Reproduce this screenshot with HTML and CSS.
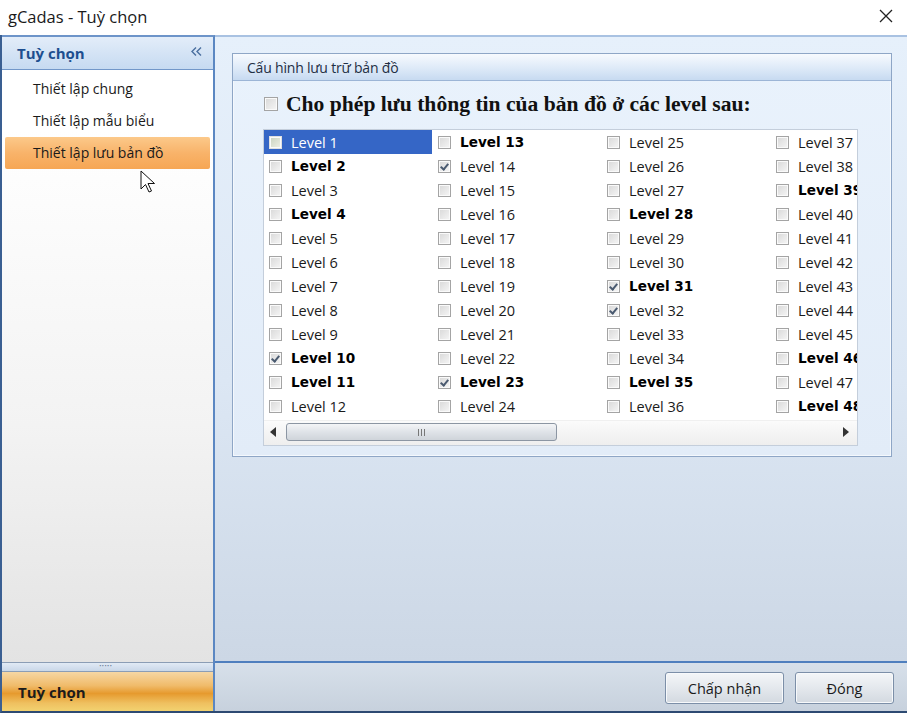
FILE: index.html
```html
<!DOCTYPE html>
<html lang="vi">
<head>
  <meta charset="UTF-8">
  <title>gCadas - Tuỳ chọn</title>
  <link rel="stylesheet" href="styles.css">
</head>
<body>
  <div class="titlebar">
    <span class="title">gCadas - Tuỳ chọn</span>
    <svg class="close" width="14" height="14" viewBox="0 0 14 14">
      <path d="M1 1 L13 13 M13 1 L1 13" stroke="#222" stroke-width="1.3" fill="none"/>
    </svg>
  </div>

  <div class="window">
    <div class="sidebar">
      <div class="sidebar-head">
        <span>Tuỳ chọn</span>
        <svg class="collapse" width="11" height="9" viewBox="0 0 11 9">
          <path d="M5 0.5 L1 4.5 L5 8.5 M10 0.5 L6 4.5 L10 8.5" stroke="#4a6f9f" stroke-width="1.4" fill="none"/>
        </svg>
      </div>
      <div class="nav">
        <div class="nav-item">Thiết lập chung</div>
        <div class="nav-item">Thiết lập mẫu biểu</div>
        <div class="nav-item active">Thiết lập lưu bản đồ</div>
        <svg class="cursor" width="16" height="24" viewBox="0 0 16 24">
          <path d="M1 1 L1 19 L5.5 14.5 L9 22 L11.5 21 L8 13.5 L14.5 13.5 Z" fill="#fff" stroke="#111" stroke-width="1" stroke-linejoin="round"/>
        </svg>
      </div>
      <div class="splitter"><span class="grip">&middot;&middot;&middot;&middot;&middot;</span></div>
      <div class="sidebar-foot">Tuỳ chọn</div>
    </div>

    <div class="content">
      <div class="pane">
        <div class="groupbox">
          <div class="groupbox-head">Cấu hình lưu trữ bản đồ</div>
          <label class="allow">
            <span class="cb big"></span>
            <span>Cho phép lưu thông tin của bản đồ ở các level sau:</span>
          </label>
          <div class="listbox">
            <div class="levels">
              <div class="level selected"><span class="cb"></span>Level 1</div>
              <div class="level bold"><span class="cb"></span>Level 2</div>
              <div class="level"><span class="cb"></span>Level 3</div>
              <div class="level bold"><span class="cb"></span>Level 4</div>
              <div class="level"><span class="cb"></span>Level 5</div>
              <div class="level"><span class="cb"></span>Level 6</div>
              <div class="level"><span class="cb"></span>Level 7</div>
              <div class="level"><span class="cb"></span>Level 8</div>
              <div class="level"><span class="cb"></span>Level 9</div>
              <div class="level bold"><span class="cb checked"></span>Level 10</div>
              <div class="level bold"><span class="cb"></span>Level 11</div>
              <div class="level"><span class="cb"></span>Level 12</div>

              <div class="level bold"><span class="cb"></span>Level 13</div>
              <div class="level"><span class="cb checked"></span>Level 14</div>
              <div class="level"><span class="cb"></span>Level 15</div>
              <div class="level"><span class="cb"></span>Level 16</div>
              <div class="level"><span class="cb"></span>Level 17</div>
              <div class="level"><span class="cb"></span>Level 18</div>
              <div class="level"><span class="cb"></span>Level 19</div>
              <div class="level"><span class="cb"></span>Level 20</div>
              <div class="level"><span class="cb"></span>Level 21</div>
              <div class="level"><span class="cb"></span>Level 22</div>
              <div class="level bold"><span class="cb checked"></span>Level 23</div>
              <div class="level"><span class="cb"></span>Level 24</div>

              <div class="level"><span class="cb"></span>Level 25</div>
              <div class="level"><span class="cb"></span>Level 26</div>
              <div class="level"><span class="cb"></span>Level 27</div>
              <div class="level bold"><span class="cb"></span>Level 28</div>
              <div class="level"><span class="cb"></span>Level 29</div>
              <div class="level"><span class="cb"></span>Level 30</div>
              <div class="level bold"><span class="cb checked"></span>Level 31</div>
              <div class="level"><span class="cb checked"></span>Level 32</div>
              <div class="level"><span class="cb"></span>Level 33</div>
              <div class="level"><span class="cb"></span>Level 34</div>
              <div class="level bold"><span class="cb"></span>Level 35</div>
              <div class="level"><span class="cb"></span>Level 36</div>

              <div class="level"><span class="cb"></span>Level 37</div>
              <div class="level"><span class="cb"></span>Level 38</div>
              <div class="level bold"><span class="cb"></span>Level 39</div>
              <div class="level"><span class="cb"></span>Level 40</div>
              <div class="level"><span class="cb"></span>Level 41</div>
              <div class="level"><span class="cb"></span>Level 42</div>
              <div class="level"><span class="cb"></span>Level 43</div>
              <div class="level"><span class="cb"></span>Level 44</div>
              <div class="level"><span class="cb"></span>Level 45</div>
              <div class="level bold"><span class="cb"></span>Level 46</div>
              <div class="level"><span class="cb"></span>Level 47</div>
              <div class="level bold"><span class="cb"></span>Level 48</div>
            </div>
            <div class="hscroll">
              <svg class="arrow" width="6" height="10" viewBox="0 0 6 10"><path d="M6 0 L0 5 L6 10 Z" fill="#333"/></svg>
              <div class="track">
                <div class="thumb"><span class="thumb-grip"></span></div>
              </div>
              <svg class="arrow" width="6" height="10" viewBox="0 0 6 10"><path d="M0 0 L6 5 L0 10 Z" fill="#333"/></svg>
            </div>
          </div>
        </div>
      </div>
      <div class="actions">
        <button class="btn">Chấp nhận</button>
        <button class="btn narrow">Đóng</button>
      </div>
    </div>
  </div>
</body>
</html>
```

FILE: styles.css
```css
body {
  margin: 0;
  width: 907px;
  height: 713px;
  overflow: hidden;
  background: #fff;
  font-family: "Open Sans", "Noto Sans", sans-serif;
  color: #111;
}

.titlebar {
  height: 35px;
  display: flex;
  align-items: center;
  justify-content: space-between;
  padding: 0 14px 3px 8px;
  box-sizing: border-box;
  background: #fff;
}

.title {
  font-size: 16.5px;
  color: #1a1a1a;
}

.window {
  display: flex;
  height: 678px;
  border-left: 2px solid #3a5f92;
  border-bottom: 2px solid #2d4a72;
  box-sizing: border-box;
}

/* left navigation */
.sidebar {
  width: 211px;
  display: flex;
  flex-direction: column;
  border-top: 2px solid #6d94c9;
  border-right: 2px solid #5b87c2;
}

.sidebar-head {
  height: 32px;
  display: flex;
  align-items: center;
  justify-content: space-between;
  padding: 0 11px 0 15px;
  background: linear-gradient(#e3edf9, #c6daf1);
  border-bottom: 1px solid #7297c9;
  color: #1d4e8f;
  font-weight: bold;
  font-size: 15px;
}

.collapse {
  margin-top: -3px;
}

.nav {
  flex: 1;
  position: relative;
  padding-top: 3px;
  background: linear-gradient(#fff 10%, #f3f3f3 60%, #e3e3e3);
}

.nav-item {
  height: 32px;
  line-height: 32px;
  margin: 0 3px;
  padding-left: 28px;
  font-size: 14px;
  color: #1a1a1a;
}

.nav-item.active {
  background: linear-gradient(#fcc98a, #f8b36a 50%, #f6a654);
  border-radius: 2px;
}

.cursor {
  position: absolute;
  left: 138px;
  top: 100px;
}

.splitter {
  height: 8px;
  border-top: 1px solid #8b9db5;
  border-bottom: 1px solid #8b9db5;
  background: linear-gradient(#e1eaf5, #c9d7e8);
  text-align: center;
  line-height: 4px;
  font-size: 10px;
  color: #6a7d96;
}

.grip {
  margin-left: -4px;
}

.sidebar-foot {
  height: 39px;
  display: flex;
  align-items: center;
  padding-left: 16px;
  font-weight: bold;
  font-size: 15px;
  color: #1b1b1b;
  background: linear-gradient(#f6d7a4, #f0bb6a 35%, #e69a2e 55%, #efc060 80%, #f2d270);
}

/* right content */
.content {
  flex: 1;
  display: flex;
  flex-direction: column;
  border-top: 2px solid #a9c2e2;
}

.pane {
  flex: 1;
  padding: 16px 0 0 17px;
  background: linear-gradient(#e6f0fb, #dce7f4 55%, #ccd7e5);
}

.groupbox {
  width: 658px;
  height: 402px;
  border: 1px solid #8ea6c6;
  background: linear-gradient(#e9f2fc, #e2ecf8);
  box-shadow: inset 0 0 0 1px #f4f8fd;
}

.groupbox-head {
  height: 26px;
  line-height: 28px;
  padding-left: 14px;
  font-size: 14px;
  letter-spacing: -0.2px;
  color: #1f2f44;
  background: linear-gradient(#f7fafe, #dbe8f7 60%, #c7daf1);
  border-bottom: 1px solid #9cb5d6;
}

.allow {
  display: flex;
  align-items: center;
  gap: 8px;
  margin: 10px 0 0 31px;
  height: 26px;
  font-family: "Liberation Serif", serif;
  font-weight: bold;
  font-size: 21.6px;
  color: #111;
}

.listbox {
  width: 593px;
  height: 315px;
  margin: 12px 0 0 30px;
  border: 1px solid #c4cedb;
  background: #fff;
  display: flex;
  flex-direction: column;
  overflow: hidden;
}

.levels {
  flex: 1;
  display: grid;
  grid-template-rows: repeat(12, 24px);
  grid-auto-flow: column;
  grid-auto-columns: 169px;
  overflow: hidden;
}

.level {
  display: flex;
  align-items: center;
  width: 168px;
  padding-left: 5px;
  box-sizing: border-box;
  font-size: 14.5px;
  color: #1a1a1a;
  white-space: nowrap;
}

.level.bold {
  font-family: "DejaVu Sans", sans-serif;
  font-weight: bold;
  font-size: 13.6px;
  color: #000;
}

.level.selected {
  background: #3566c6;
  color: #fff;
}

.cb {
  width: 13px;
  height: 13px;
  flex: none;
  box-sizing: border-box;
  border: 1px solid #a4a4a4;
  background: linear-gradient(135deg, #d8d8d8, #f6f6f6);
  box-shadow: inset 0 0 0 1px #fafafa;
  position: relative;
}

.cb.big {
  width: 14px;
  height: 14px;
}

.level .cb {
  margin-right: 9px;
}

.level.selected .cb {
  border-color: #e0e0e0;
  background: linear-gradient(135deg, #c9d2c0, #f0f0e6);
}

.cb.checked::after {
  content: "";
  position: absolute;
  left: 3px;
  top: 1px;
  width: 3px;
  height: 6px;
  border: solid #4a5a70;
  border-width: 0 2px 2px 0;
  transform: rotate(40deg);
}

.hscroll {
  height: 25px;
  display: flex;
  align-items: center;
  gap: 10px;
  padding: 0 8px 2px 6px;
  box-sizing: border-box;
  background: linear-gradient(#fbfbfb, #eeeeee);
  border-top: 1px solid #f0f0f0;
}

.track {
  flex: 1;
  height: 18px;
}

.thumb {
  width: 271px;
  height: 18px;
  box-sizing: border-box;
  border: 1px solid #8c96a3;
  border-radius: 3px;
  background: linear-gradient(#f4f5f7, #dfe3e8 50%, #cfd4da);
  display: flex;
  align-items: center;
  justify-content: center;
}

.thumb-grip {
  width: 7px;
  height: 7px;
  background: repeating-linear-gradient(90deg, #777 0 1px, transparent 1px 3px);
}

/* bottom buttons */
.actions {
  height: 48px;
  display: flex;
  align-items: center;
  justify-content: flex-end;
  gap: 11px;
  padding-right: 13px;
  border-top: 2px solid #4f7fbe;
  background: linear-gradient(#d7e0ea, #c7d1dd);
}

.btn {
  width: 119px;
  height: 32px;
  margin-top: 2px;
  font-family: "Open Sans", "Noto Sans", sans-serif;
  font-size: 14.5px;
  color: #1a1a1a;
  border: 1px solid #7c8fa8;
  border-radius: 3px;
  background: linear-gradient(#f4f6f8, #e4e8ed 50%, #d3d9e0);
  box-shadow: inset 0 0 0 1px #f7f9fb;
}

.btn.narrow {
  width: 99px;
}
```
